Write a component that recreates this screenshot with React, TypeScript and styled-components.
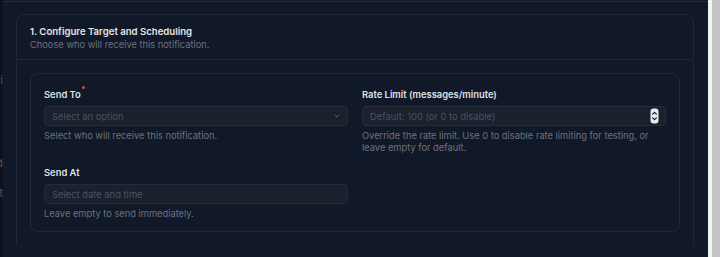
import React from 'react';
import styled, { createGlobalStyle } from 'styled-components';

const GlobalStyle = createGlobalStyle`
  html, body {
    margin: 0;
    padding: 0;
    background: #111827;
  }
  body {
    font-family: Inter, "Noto Sans", "Liberation Sans", sans-serif;
    -webkit-font-smoothing: antialiased;
  }
`;

const Frame = styled.div`
  display: flex;
  width: 720px;
  height: 257px;
  overflow: hidden;
  background: #111827;
`;

const SideEdge = styled.div`
  width: 3px;
  flex: none;
  background: #0c111b;
  overflow: hidden;
  position: relative;
  color: #4b5261;
  font-size: 11px;
`;

const EdgeLetter = styled.span<{ $top: number }>`
  position: absolute;
  right: 0;
  top: ${(p) => p.$top}px;
  line-height: 12px;
`;

const Main = styled.main`
  flex: 1;
  border-top: 1px solid #262d3a;
  margin-top: 1px;
  padding: 12px 14px 0 13px;
`;

const Gutter = styled.div`
  width: 12px;
  flex: none;
  border-left: 4px solid #f4f4f5;
  background: #c3c3c3;
  box-sizing: border-box;
`;

const Card = styled.section`
  border: 1px solid #1f2634;
  border-bottom-color: transparent;
  border-radius: 8px 8px 0 0;
  height: 231px;
  box-sizing: border-box;
`;

const CardHeader = styled.header`
  padding: 10px 13px 8px;
  border-bottom: 1px solid #1f2634;
`;

const Title = styled.h2`
  margin: 0;
  font-size: 9.6px;
  line-height: 13px;
  font-weight: 600;
  color: #e5e7eb;
`;

const Subtitle = styled.p`
  margin: 0;
  font-size: 9.3px;
  line-height: 13px;
  color: #6b7280;
`;

const CardBody = styled.div`
  padding: 13px;
`;

const Panel = styled.div`
  border: 1px solid #212836;
  border-radius: 8px;
  padding: 14px 13px 11px 13px;
  display: grid;
  grid-template-columns: 1fr 1fr;
  column-gap: 14px;
  row-gap: 12px;
  align-items: start;
`;

const Field = styled.div`
  display: flex;
  flex-direction: column;
`;

const Label = styled.label`
  font-size: 9.4px;
  line-height: 13px;
  font-weight: 600;
  color: #dfe2e7;
  margin-bottom: 5px;
  position: relative;
  align-self: flex-start;
`;

const Required = styled.span`
  position: absolute;
  right: -4px;
  top: -2px;
  width: 3px;
  height: 3px;
  border-radius: 50%;
  background: #e5484d;
`;

const InputBox = styled.div`
  height: 20px;
  box-sizing: border-box;
  border: 1px solid #242b39;
  background: #1a202c;
  border-radius: 4px;
  display: flex;
  align-items: center;
  justify-content: space-between;
  padding: 0 6px 0 7px;
`;

const Placeholder = styled.span`
  font-size: 9.4px;
  color: #4b5363;
`;

const Help = styled.p`
  margin: 4px 0 0;
  font-size: 9.3px;
  line-height: 12px;
  color: #6b7280;
`;

const Chevron = () => (
  <svg width="8" height="8" viewBox="0 0 24 24" fill="none" stroke="#5b6372" strokeWidth="3" strokeLinecap="round" strokeLinejoin="round">
    <path d="m6 9 6 6 6-6" />
  </svg>
);

const Spinner = () => (
  <svg width="9" height="16" viewBox="0 0 9 16">
    <rect x="0.5" y="0.5" width="8" height="15" rx="3" fill="#e8eaee" />
    <path d="M2.6 6.2 4.5 4.3 6.4 6.2" fill="none" stroke="#1a202c" strokeWidth="1.2" strokeLinecap="round" strokeLinejoin="round" />
    <path d="M2.6 9.8 4.5 11.7 6.4 9.8" fill="none" stroke="#1a202c" strokeWidth="1.2" strokeLinecap="round" strokeLinejoin="round" />
  </svg>
);

export default function App() {
  return (
    <>
      <GlobalStyle />
      <Frame>
        <SideEdge>
          <EdgeLetter $top={74}>i</EdgeLetter>
          <EdgeLetter $top={157}>d</EdgeLetter>
          <EdgeLetter $top={187}>t</EdgeLetter>
        </SideEdge>
        <Main>
          <Card>
            <CardHeader>
              <Title>1. Configure Target and Scheduling</Title>
              <Subtitle>Choose who will receive this notification.</Subtitle>
            </CardHeader>
            <CardBody>
              <Panel>
                <Field>
                  <Label>
                    Send To
                    <Required />
                  </Label>
                  <InputBox>
                    <Placeholder>Select an option</Placeholder>
                    <Chevron />
                  </InputBox>
                  <Help>Select who will receive this notification.</Help>
                </Field>
                <Field>
                  <Label>Rate Limit (messages/minute)</Label>
                  <InputBox>
                    <Placeholder>Default: 100 (or 0 to disable)</Placeholder>
                    <Spinner />
                  </InputBox>
                  <Help>
                    Override the rate limit. Use 0 to disable rate limiting for testing, or
                    <br />
                    leave empty for default.
                  </Help>
                </Field>
                <Field>
                  <Label>Send At</Label>
                  <InputBox>
                    <Placeholder>Select date and time</Placeholder>
                  </InputBox>
                  <Help>Leave empty to send immediately.</Help>
                </Field>
              </Panel>
            </CardBody>
          </Card>
        </Main>
        <Gutter />
      </Frame>
    </>
  );
}
